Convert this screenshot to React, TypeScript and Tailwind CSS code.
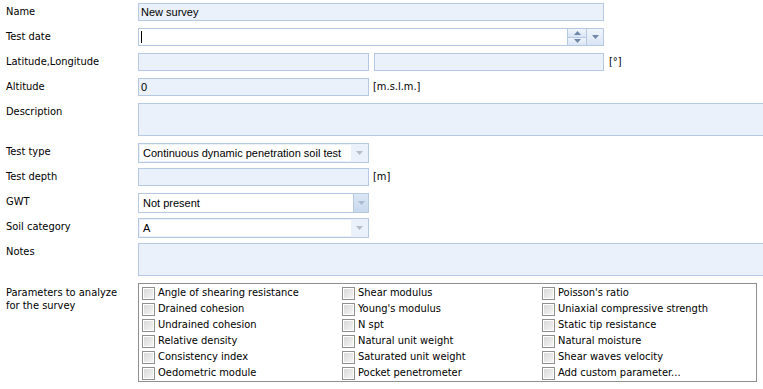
import React from "react";

const border = "border border-[#b7c9e2]";
const fill = "bg-[#eaf1fb]";
const inputFont = "font-['Liberation_Sans',Arial,sans-serif] text-[11px]";

function Label({ children, className = "" }: { children: React.ReactNode; className?: string }) {
  return <div className={`w-[138px] shrink-0 pl-[6px] leading-[18px] ${className}`}>{children}</div>;
}

function Arrow({ up = false, color = "#6f88a8" }: { up?: boolean; color?: string }) {
  return (
    <svg width="7" height="4" viewBox="0 0 7 4">
      <path d={up ? "M0 4 L3.5 0 L7 4 Z" : "M0 0 L7 0 L3.5 4 Z"} fill={color} />
    </svg>
  );
}

function Combo({ value, split = false }: { value: string; split?: boolean }) {
  if (split) {
    return (
      <div className={`flex h-[20px] w-[231px] ${border} bg-white`}>
        <div className={`flex-1 pl-[4px] leading-[18px] ${inputFont}`}>{value}</div>
        <div className="flex w-[15px] items-center justify-center border-l border-[#b7c9e2] bg-gradient-to-b from-[#dce7f5] to-[#c8d8ee]">
          <Arrow color="#a9b9cf" />
        </div>
      </div>
    );
  }
  return (
    <div className={`flex h-[20px] w-[231px] ${border} ${fill} p-[1px]`}>
      <div className={`mr-[1px] flex-1 whitespace-nowrap bg-white pl-[3px] leading-[16px] ${inputFont}`}>{value}</div>
      <div className="flex w-[15px] items-center justify-center">
        <Arrow color="#b4bcc8" />
      </div>
    </div>
  );
}

function Check({ label }: { label: string }) {
  return (
    <div className="flex h-[16px] items-center">
      <div className="h-[13px] w-[13px] shrink-0 border border-[#8f8f8f] bg-white p-[1px]">
        <div className="h-full w-full bg-gradient-to-br from-[#d9d9d9] to-[#f4f4f4]" />
      </div>
      <span className="ml-[3px] whitespace-nowrap leading-[16px]">{label}</span>
    </div>
  );
}

const params = [
  ["Angle of shearing resistance", "Drained cohesion", "Undrained cohesion", "Relative density", "Consistency index", "Oedometric module"],
  ["Shear modulus", "Young's modulus", "N spt", "Natural unit weight", "Saturated unit weight", "Pocket penetrometer"],
  ["Poisson's ratio", "Uniaxial compressive strength", "Static tip resistance", "Natural moisture", "Shear waves velocity", "Add custom parameter..."],
];

export default function App() {
  return (
    <div className="h-[389px] w-[763px] overflow-hidden bg-white font-['DejaVu_Sans_Condensed','Liberation_Sans',sans-serif] text-[11px] text-black">
      <div className="flex flex-col pt-[3px]">
        {/* Name */}
        <div className="flex">
          <Label>Name</Label>
          <div className={`h-[18px] w-[466px] ${border} ${fill} pl-[2px] leading-[16px] ${inputFont}`}>New survey</div>
        </div>

        {/* Test date */}
        <div className="mt-[7px] flex">
          <Label>Test date</Label>
          <div className={`flex h-[18px] w-[466px] ${border} bg-white`}>
            <div className="flex flex-1 items-center pl-[2px]">
              <div className="h-[12px] w-[1px] bg-black" />
            </div>
            <div className="flex w-[19px] flex-col border-l border-[#b7c9e2]">
              <div className="flex flex-1 items-center justify-center border-b border-[#b7c9e2] bg-gradient-to-b from-[#f0f5fc] to-[#d9e5f5]">
                <Arrow up />
              </div>
              <div className="flex flex-1 items-center justify-center bg-gradient-to-b from-[#f0f5fc] to-[#d9e5f5]">
                <Arrow />
              </div>
            </div>
            <div className="flex w-[17px] items-center justify-center border-l border-[#b7c9e2] bg-gradient-to-b from-[#f0f5fc] to-[#d9e5f5]">
              <Arrow />
            </div>
          </div>
        </div>

        {/* Latitude, Longitude */}
        <div className="mt-[7px] flex items-start">
          <Label>Latitude,Longitude</Label>
          <div className={`h-[18px] w-[231px] ${border} ${fill}`} />
          <div className={`ml-[5px] h-[18px] w-[230px] ${border} ${fill}`} />
          <span className="ml-[5px] leading-[18px]">[°]</span>
        </div>

        {/* Altitude */}
        <div className="mt-[7px] flex items-start">
          <Label>Altitude</Label>
          <div className={`h-[18px] w-[231px] ${border} ${fill} pl-[2px] leading-[16px] ${inputFont}`}>0</div>
          <span className="ml-[4px] leading-[18px]">[m.s.l.m.]</span>
        </div>

        {/* Description */}
        <div className="mt-[7px] flex items-start">
          <Label>Description</Label>
          <div className={`h-[33px] flex-1 border-y border-l border-[#b7c9e2] ${fill}`} />
        </div>

        {/* Test type */}
        <div className="mt-[7px] flex items-start">
          <Label>Test type</Label>
          <Combo value="Continuous dynamic penetration soil test" />
        </div>

        {/* Test depth */}
        <div className="mt-[5px] flex items-start">
          <Label>Test depth</Label>
          <div className={`h-[18px] w-[231px] ${border} ${fill}`} />
          <span className="ml-[4px] leading-[18px]">[m]</span>
        </div>

        {/* GWT */}
        <div className="mt-[7px] flex items-start">
          <Label>GWT</Label>
          <Combo value="Not present" split />
        </div>

        {/* Soil category */}
        <div className="mt-[5px] flex items-start">
          <Label>Soil category</Label>
          <Combo value="A" />
        </div>

        {/* Notes */}
        <div className="mt-[5px] flex items-start">
          <Label>Notes</Label>
          <div className={`h-[33px] flex-1 border-y border-l border-[#b7c9e2] ${fill}`} />
        </div>

        {/* Parameters */}
        <div className="mt-[7px] flex items-start">
          <Label className="pt-[3px] !leading-[13px]">
            Parameters to analyze
            <br />
            for the survey
          </Label>
          <div className="flex h-[99px] w-[619px] border border-[#8e8f8f] pl-[3px] pt-[1px]">
            {params.map((col, i) => (
              <div key={i} className={i === 2 ? "flex-1" : "w-[200px]"}>
                {col.map((p) => (
                  <Check key={p} label={p} />
                ))}
              </div>
            ))}
          </div>
        </div>
      </div>
    </div>
  );
}
